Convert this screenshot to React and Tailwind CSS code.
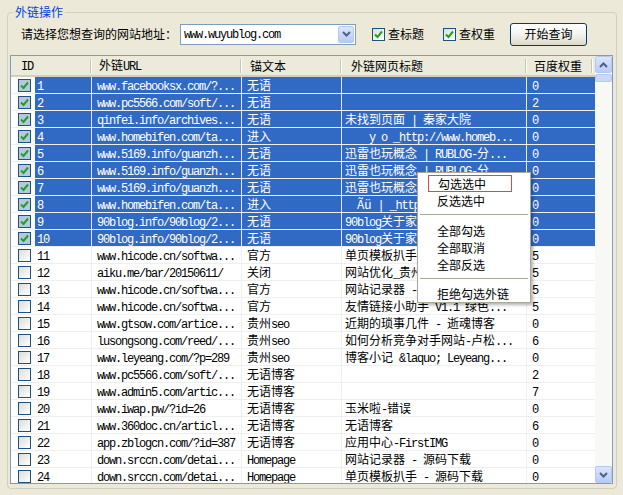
import React from 'react';

const rows = [
    [1, 'www.facebooksx.com/?...', '无语', '', '0'],
    [2, 'www.pc5566.com/soft/...', '无语', '', '2'],
    [3, 'qinfei.info/archives...', '无语', '未找到页面 | 秦家大院', '0'],
    [4, 'www.homebifen.com/ta...', '进入', '    y o _http://www.homeb...', '0'],
    [5, 'www.5169.info/guanzh...', '无语', '迅雷也玩概念 | RUBLOG-分...', '0'],
    [6, 'www.5169.info/guanzh...', '无语', '迅雷也玩概念 | RUBLOG-分...', '0'],
    [7, 'www.5169.info/guanzh...', '无语', '迅雷也玩概念 | RUBLOG-分...', '0'],
    [8, 'www.homebifen.com/ta...', '进入', '  Ãü | _http://www.homeb...', '0'],
    [9, '90blog.info/90blog/2...', '无语', '90blog关于家庭网络...', '0'],
    [10, '90blog.info/90blog/2...', '无语', '90blog关于家庭网络...', '0'],
    [11, 'www.hicode.cn/softwa...', '官方', '单页模板扒手 - 源码下载', '5'],
    [12, 'aiku.me/bar/20150611/', '关闭', '网站优化_贵州seo...', '5'],
    [13, 'www.hicode.cn/softwa...', '官方', '网站记录器 - 源码下载', '5'],
    [14, 'www.hicode.cn/softwa...', '官方', '友情链接小助手 V1.1 绿色...', '5'],
    [15, 'www.gtsow.com/artice...', '贵州seo', '近期的琐事几件 - 逝魂博客', '0'],
    [16, 'lusongsong.com/reed/...', '贵州seo', '如何分析竞争对手网站-卢松...', '6'],
    [17, 'www.leyeang.com/?p=289', '贵州seo', '博客小记 &laquo; Leyeang...', '0'],
    [18, 'www.pc5566.com/soft/...', '无语博客', '', '2'],
    [19, 'www.admin5.com/artic...', '无语博客', '', '7'],
    [20, 'www.iwap.pw/?id=26', '无语博客', '玉米啦-错误', '0'],
    [21, 'www.360doc.cn/articl...', '无语博客', '无语博客', '6'],
    [22, 'app.zblogcn.com/?id=387', '无语博客', '应用中心-FirstIMG', '0'],
    [23, 'down.srccn.com/detai...', 'Homepage', '网站记录器 - 源码下载', '0'],
    [24, 'down.srccn.com/detai...', 'Homepage', '单页模板扒手 - 源码下载', '0'],
];

// SimSun-like mix: ascii half width, CJK full width
const Mix = ({ text }) => {
    const parts = String(text).split(/([\x00-\x7f]+)/).filter(Boolean);
    return (
        <span className="whitespace-pre">
            {parts.map((p, i) =>
                /^[\x00-\x7f]+$/.test(p) ? (
                    <span key={i} className="font-['Liberation_Mono',monospace] text-[12px] tracking-[-1.2px]">{p}</span>
                ) : (
                    <span key={i} className="font-['Noto_Sans_CJK_SC',sans-serif] text-[12px]">{p}</span>
                )
            )}
        </span>
    );
};

const Tick = () => (
    <svg width="9" height="9" viewBox="0 0 9 9">
        <polyline points="1,4.5 3.5,7 8,1.5" fill="none" stroke="#21a121" strokeWidth="2" />
    </svg>
);

const Check = ({ checked, sel }) => (
    <span
        className={`flex h-[13px] w-[13px] shrink-0 items-center justify-center border border-[#1c5180] ${
            sel ? 'bg-[#b6c8e0]' : 'bg-gradient-to-br from-[#dcdcd7] to-white'
        }`}
    >
        {checked && <Tick />}
    </span>
);

const Chevron = ({ up }) => (
    <svg width="9" height="6" viewBox="0 0 9 6">
        <polyline
            points={up ? '1,5 4.5,1.5 8,5' : '1,1 4.5,4.5 8,1'}
            fill="none"
            stroke="#4d6185"
            strokeWidth="2"
        />
    </svg>
);

const ScrollBtn = ({ up }) => (
    <div className="flex h-[17px] w-[17px] items-center justify-center rounded-[2px] border border-[#b5c8f0] bg-gradient-to-b from-[#dbe5fd] to-[#b8cbf7]">
        <Chevron up={up} />
    </div>
);

const HeadCell = ({ w, pl, label }) => (
    <div className={`flex h-full shrink-0 items-center ${w}`}>
        <div className={`flex-1 ${pl}`}>
            <Mix text={label} />
        </div>
        <div className="my-[3px] h-[14px] w-[2px] border-l border-[#c7c5b2] bg-white" />
    </div>
);

const Row = ({ r }) => {
    const [id, url, anchor, title, weight] = r;
    const sel = id <= 10;
    const cell = sel ? 'bg-[#316ac5] text-white border-[#e6ecf6]' : 'bg-white text-black border-[#efefef]';
    return (
        <div className="flex h-[17px] shrink-0 border-b border-[#efefef] leading-[16px]">
            <div className="flex w-[24px] shrink-0 items-center pl-[7px]">
                <Check checked={sel} sel={sel} />
            </div>
            <div className={`w-[57px] shrink-0 border-r pl-[2px] ${cell}`}><Mix text={String(id)} /></div>
            <div className={`w-[150px] shrink-0 overflow-hidden border-r pl-[5px] ${cell}`}><Mix text={url} /></div>
            <div className={`w-[100px] shrink-0 overflow-hidden border-r pl-[5px] ${cell}`}><Mix text={anchor} /></div>
            <div className={`w-[185px] shrink-0 overflow-hidden border-r pl-[3px] ${cell}`}><Mix text={title} /></div>
            <div className={`flex-1 pl-[5px] ${sel ? 'bg-[#316ac5] text-white' : 'bg-white'}`}><Mix text={weight} /></div>
        </div>
    );
};

const MenuItem = ({ label, hot }) => (
    <div className="flex h-[17px] items-center">
        <div className={`ml-[10px] flex h-[17px] w-[84px] items-center pl-[9px] ${hot ? 'border border-[#d94a4a]' : ''}`}>
            <Mix text={label} />
        </div>
    </div>
);

const Sep = ({ cls }) => (
    <div className={`mx-[2px] h-[2px] border-t border-[#aca899] bg-white ${cls}`} />
);

export default function App() {
    return (
        <div className="relative h-[495px] w-[623px] overflow-hidden bg-[#ece9d8] pl-[7px] pt-[12px] font-['Noto_Sans_CJK_SC',sans-serif] text-[12px] text-black">
            <div className="relative h-[477px] w-[610px] rounded-[4px] border border-[#d0d0bf]">
                <span className="absolute left-[5px] top-[-10px] bg-[#ece9d8] px-[2px] leading-[17px] text-[#0046d5]">外链操作</span>

                {/* query bar */}
                <div className="mt-[9px] flex h-[24px] items-center pl-[13px]">
                    <Mix text="请选择您想查询的网站地址：" />
                    <div className="ml-[3px] flex h-[21px] w-[176px] items-center justify-between border border-[#7f9db9] bg-white pl-[3px] pr-[1px]">
                        <Mix text="www.wuyublog.com" />
                        <div className="flex h-[17px] w-[16px] items-center justify-center rounded-[2px] border border-[#b5c8f0] bg-gradient-to-b from-[#dbe5fd] to-[#b8cbf7]">
                            <Chevron />
                        </div>
                    </div>
                    <div className="ml-[16px] flex items-center">
                        <Check checked />
                        <span className="ml-[3px]"><Mix text="查标题" /></span>
                    </div>
                    <div className="ml-[19px] flex items-center">
                        <Check checked />
                        <span className="ml-[3px]"><Mix text="查权重" /></span>
                    </div>
                    <button className="ml-[15px] flex h-[23px] w-[77px] items-center justify-center rounded-[3px] border border-[#003c74] bg-gradient-to-b from-white via-[#f4f3ee] to-[#dcd8ca]">
                        <Mix text="开始查询" />
                    </button>
                </div>

                {/* list view */}
                <div className="ml-[2px] mt-[9px] flex h-[429px] w-[603px] overflow-hidden border border-[#7f9db9] bg-white">
                    <div className="flex w-[584px] shrink-0 flex-col overflow-hidden">
                        <div className="flex h-[21px] shrink-0 border-b-[2px] border-[#d2cebd] bg-[#ebeadb]">
                            <HeadCell w="w-[81px]" pl="pl-[10px]" label="ID" />
                            <HeadCell w="w-[150px]" pl="pl-[7px]" label="外链URL" />
                            <HeadCell w="w-[100px]" pl="pl-[8px]" label="锚文本" />
                            <HeadCell w="w-[185px]" pl="pl-[9px]" label="外链网页标题" />
                            <HeadCell w="w-[66px]" pl="pl-[7px]" label="百度权重" />
                        </div>
                        {rows.map((r) => (
                            <Row key={r[0]} r={r} />
                        ))}
                    </div>
                    <div className="flex w-[17px] shrink-0 flex-col bg-[#f8f8f5]">
                        <ScrollBtn up />
                        <div className="mt-[1px] h-[8px] rounded-[2px] border border-[#b5c8f0] bg-[#c9d8fb]" />
                        <div className="flex-1" />
                        <ScrollBtn />
                    </div>
                </div>
            </div>

            {/* context menu */}
            <div className="absolute left-[417px] top-[172px] flex h-[131px] w-[114px] flex-col border border-[#aca899] bg-white pt-[2px] shadow-[2px_2px_3px_rgba(0,0,0,0.3)]">
                <MenuItem label="勾选选中" hot />
                <div className="h-[1px]" />
                <MenuItem label="反选选中" />
                <Sep cls="mb-[7px] mt-[4px]" />
                <MenuItem label="全部勾选" />
                <MenuItem label="全部取消" />
                <MenuItem label="全部反选" />
                <Sep cls="mb-[5px] mt-[5px]" />
                <MenuItem label="拒绝勾选外链" />
            </div>
        </div>
    );
}
